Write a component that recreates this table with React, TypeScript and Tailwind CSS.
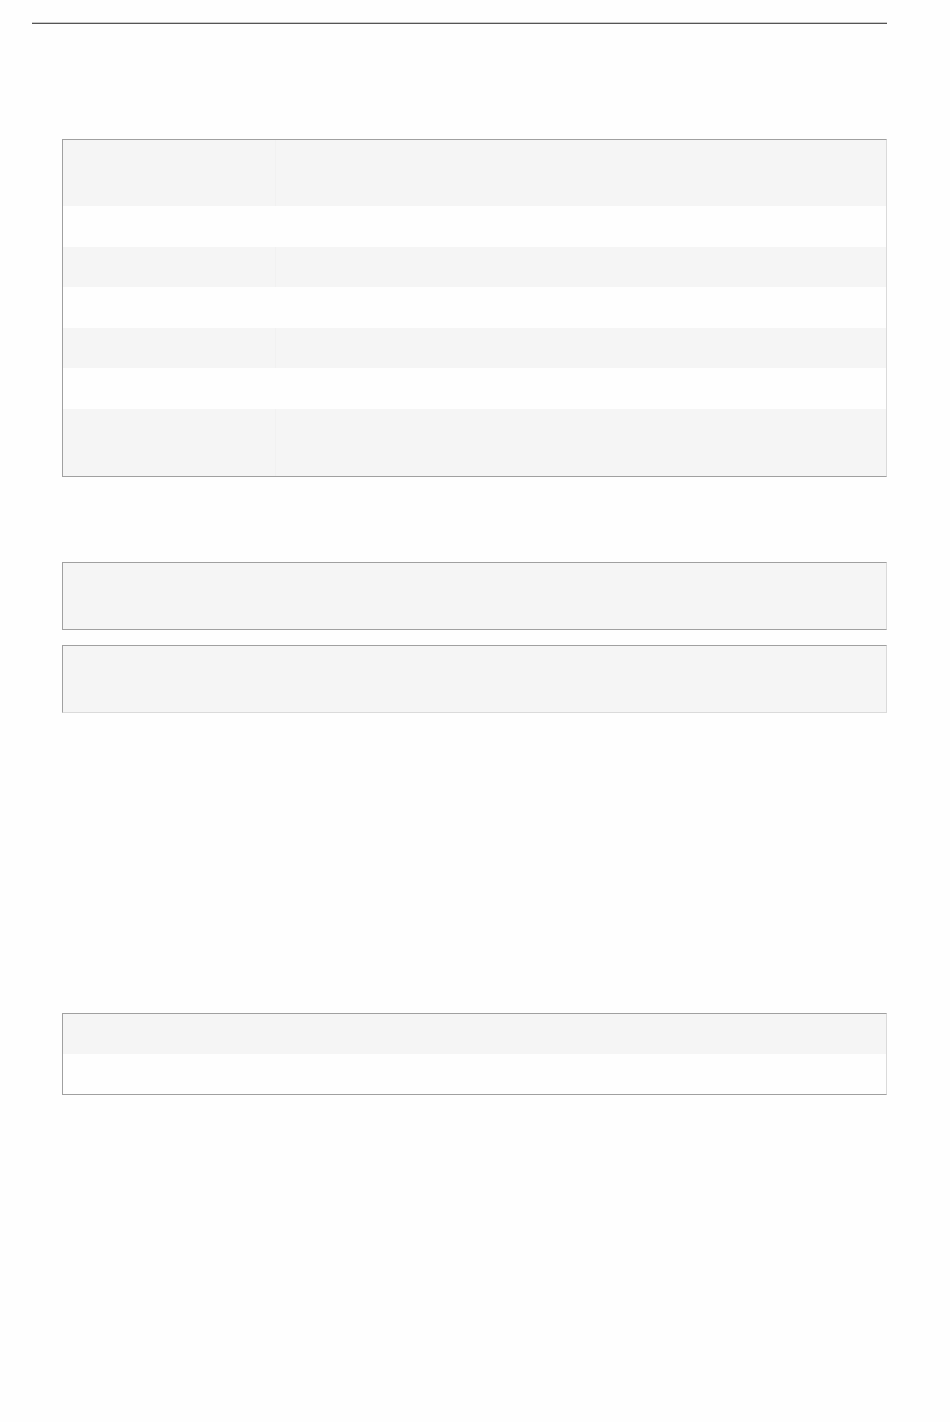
const rows = [
    { h: "h-[66px]", bg: "bg-[#f5f5f5]", line: "border-[#f1f1f1]" },
    { h: "h-[41px]", bg: "bg-[#fefefe]", line: "border-[#fefefe]" },
    { h: "h-[40px]", bg: "bg-[#f5f5f5]", line: "border-[#f1f1f1]" },
    { h: "h-[41px]", bg: "bg-[#fefefe]", line: "border-[#fefefe]" },
    { h: "h-[40px]", bg: "bg-[#f5f5f5]", line: "border-[#f1f1f1]" },
    { h: "h-[41px]", bg: "bg-[#fefefe]", line: "border-[#fefefe]" },
    { h: "h-[67px]", bg: "bg-[#f5f5f5]", line: "border-[#f1f1f1]" },
];

const Row: React.FC<{ h: string; bg: string; line?: string }> = ({ h, bg, line }) => (
    <div className={`flex ${h} ${bg}`}>
        {line ? (
            <>
                <div className={`w-[213px] border-r ${line}`} />
                <div className="flex-1" />
            </>
        ) : (
            <div className="flex-1" />
        )}
    </div>
);

const App: React.FC = () => {
    return (
        <div className="min-h-[1422px] bg-[#fefefe] pl-8 pt-[22px] font-['Liberation_Sans',sans-serif]">
            <div className="w-[855px]">
                <div className="h-px bg-[#c8c8c8]" />
                <div className="h-px bg-[#555555]" />
            </div>

            <div className="ml-[30px] mt-[115px] w-[825px] border border-[#a0a0a0] border-r-[#dadada]">
                {rows.map((r, i) => (
                    <Row key={i} h={r.h} bg={r.bg} line={r.line} />
                ))}
            </div>

            <div className="ml-[30px] mt-[85px] w-[825px] border border-[#a0a0a0] border-r-[#dadada]">
                <Row h="h-[66px]" bg="bg-[#f5f5f5]" />
            </div>

            <div className="ml-[30px] mt-[15px] w-[825px] border border-[#a0a0a0] border-r-[#dadada] border-b-[#dadada]">
                <Row h="h-[66px]" bg="bg-[#f5f5f5]" />
            </div>

            <div className="ml-[30px] mt-[300px] w-[825px] border border-[#a0a0a0] border-r-[#dadada]">
                <Row h="h-[40px]" bg="bg-[#f5f5f5]" />
                <Row h="h-[40px]" bg="bg-[#fefefe]" />
            </div>
        </div>
    );
};

export default App;
